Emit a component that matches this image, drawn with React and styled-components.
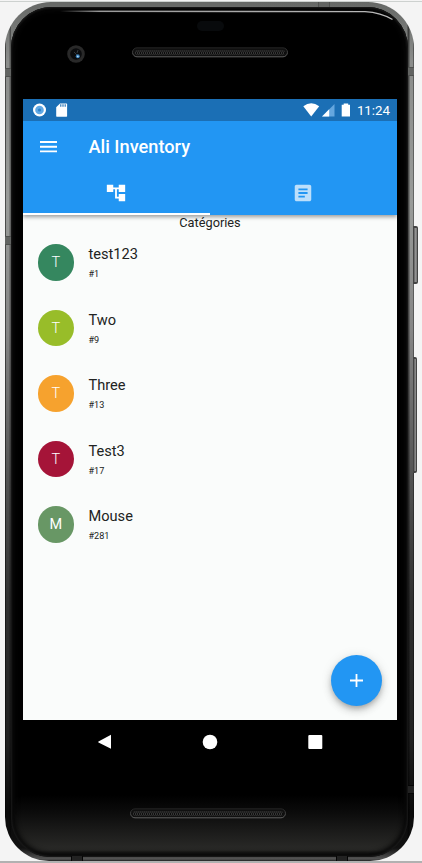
import React from 'react';
import styled, { createGlobalStyle } from 'styled-components';

const GlobalStyle = createGlobalStyle`
  * { box-sizing: border-box; }
  body { margin: 0; background: #f4f4f4; font-family: Roboto, sans-serif; }
`;

const Page = styled.main`
  width: 422px;
  height: 863px;
  padding: 2px 0 0 5px;
  overflow: hidden;
  background: linear-gradient(#f4f4f4 1px, #cdd1cf 1px 2px, #f4f4f4 2px 861px, #b1b1b1 861px);
`;

const Phone = styled.div`
  position: relative;
  width: 409px;
  height: 859px;
  padding: 5px 6px;
  border-radius: 46px 46px 44px 44px;
  background:
    linear-gradient(90deg, rgba(0,0,0,.5) 0 1px, transparent 1px 4px, rgba(0,0,0,.35) 5px 6px, transparent 6px 402px, rgba(0,0,0,.5) 403px 404px, transparent 405px 408px, rgba(0,0,0,.35) 408px),
    linear-gradient(#666866 0, #8b8d8b 60px, #999b99 200px, #858585 330px, #515151 480px, #303030 600px, #202020 740px, #090909 810px, #111 846px, #555 857px, #222 859px);
`;

const Bezel = styled.div`
  display: flex;
  flex-direction: column;
  width: 397px;
  height: 850px;
  padding: 0 12px;
  border-radius: 41px 41px 39px 39px;
  background: linear-gradient(#000 0, #000 788px, #0b0b0b 805px, #1a1a19 823px, #2a2a28 843px, #111 848px);
  box-shadow: inset 0 0 2px 1px #1c1c1c, inset 0 0 5px 4px #070707;
`;

const Antenna = styled.i`
  position: absolute;
  left: ${p => p.$x}px;
  top: ${p => p.$y}px;
  width: ${p => p.$w || 6}px;
  height: ${p => p.$h || 9}px;
  background: ${p => p.$dark ? '#222' : '#626462'};
  border: solid ${p => p.$dark ? '#050505' : '#4f514f'};
  border-width: ${p => p.$w ? '0 1px' : '1px 0'};
`;

const SideKey = styled.i`
  position: absolute;
  left: 408px;
  top: ${p => p.$y}px;
  width: ${p => p.$w}px;
  height: ${p => p.$h}px;
  border: solid #444;
  border-width: 2px 1px 2px 0;
  border-radius: 0 2px 2px 0;
  background: linear-gradient(90deg, #444 1px, #9a9a9a 2px, #777);
`;

const Reflection = styled.svg`
  position: absolute;
  left: 0;
  top: 0;
  pointer-events: none;
`;

const TopBezel = styled.div`
  display: grid;
  grid-template-columns: 77px 1fr 77px;
  align-items: start;
  flex: 0 0 92px;
  margin: 0 -6px;
`;

const Camera = styled.svg`
  display: block;
  margin: 38px 0 0 50px;
`;

const Earpiece = styled.div`
  display: flex;
  flex-direction: column;
  align-items: center;
  gap: 16px;
  padding: 14px 0 0 1px;
`;

const Sensor = styled.span`
  width: 27px;
  height: 10px;
  border-radius: 5px;
  background: #080a0c;
`;

const Grille = styled.svg`
  display: block;
`;

const Screen = styled.section`
  display: flex;
  flex-direction: column;
  position: relative;
  width: 374px;
  height: 621px;
  flex-shrink: 0;
  background: #fafcfb;
  color: #212322;
`;

const StatusBar = styled.div`
  display: flex;
  justify-content: space-between;
  height: 22px;
  padding: 0 7px 0 9px;
  background: #1b6fb5;
  color: #fff;
`;

const StatusIcons = styled.svg` display: block; `;

const StatusRight = styled.div`
  display: flex;
  align-items: center;
  gap: 5.5px;
  font-size: 13.3px;
  line-height: 22px;
`;

const Clock = styled.span`
  padding-top: 1px;
`;

const Header = styled.header`
  display: flex;
  flex-direction: column;
  height: 94px;
  flex-shrink: 0;
  background: #2296f3;
  box-shadow: 0 2px 4px rgba(0,0,0,.38);
  clip-path: inset(0 0 -8px 0);
  z-index: 1;
`;

const Toolbar = styled.div`
  display: flex;
  align-items: center;
  height: 51px;
  padding-left: 17px;
  color: #fff;
`;

const MenuButton = styled.button`
  display: flex;
  width: 49px;
  padding: 0;
  border: 0;
  background: none;
`;

const Title = styled.h1`
  margin: 0 0 0 -.5px;
  font-size: 18.2px;
  font-weight: 500;
  line-height: 22px;
`;

const Tabs = styled.nav`
  display: grid;
  grid-template-columns: 1fr 1fr;
  height: 43px;
`;

const Tab = styled.button`
  display: flex;
  align-items: center;
  justify-content: center;
  padding: 0 1px 0 0;
  border: 0;
  border-bottom: 2px solid ${p => p.$active ? '#fff' : 'transparent'};
  background: none;
  color: ${p => p.$active ? '#fff' : '#bcdffb'};
`;

const Heading = styled.h2`
  margin: 0;
  height: 15px;
  text-align: center;
  font-size: 12.75px;
  font-weight: 400;
  line-height: 16px;
`;

const List = styled.ul`
  margin: 0;
  padding: 0;
  list-style: none;
`;

const Row = styled.li`
  display: flex;
  align-items: center;
  gap: 14.5px;
  height: 65.5px;
  padding-left: 14.5px;
`;

const Avatar = styled.span`
  display: grid;
  place-items: center;
  width: 36.5px;
  height: 36.5px;
  margin-top: -1px;
  padding-top: 1px;
  border-radius: 50%;
  background: ${p => p.$color};
  color: #fff;
  font-size: 14.5px;
  font-weight: ${p => p.$bold ? 400 : 300};
`;

const Label = styled.div`
  display: flex;
  flex-direction: column;
  gap: 3px;
  padding-top: 1px;
`;

const Name = styled.span`
  font-size: 14.6px;
  line-height: 19px;
`;

const Id = styled.span`
  font-size: 9.1px;
  line-height: 14px;
`;

const AddButton = styled.button`
  position: absolute;
  right: 15px;
  bottom: 14.5px;
  display: grid;
  place-items: center;
  width: 51px;
  height: 51px;
  padding: 0;
  border: 0;
  border-radius: 50%;
  background: #2296f3;
  box-shadow: 0 3px 5px -1px rgba(0,0,0,.2), 0 5px 9px rgba(0,0,0,.14), 0 1px 12px rgba(0,0,0,.1);
`;

const NavBar = styled.div`
  display: flex;
  justify-content: center;
  align-items: center;
  height: 44px;
  flex-shrink: 0;
`;

const NavIcon = styled.svg`
  display: block;
`;

const BottomBezel = styled.div`
  display: flex;
  justify-content: center;
  padding: 44px 4px 0 0;
`;

function SpeakerGrille() {
  return (
    <Grille width="156" height="11" viewBox="0 0 156 11" fill="none">
      <defs>
        <pattern id="mesh" width="4" height="4" patternUnits="userSpaceOnUse">
          <rect width="4" height="4" fill="#0b0b0b" />
          <path d="M.5 0l1.5 2-1.5 2M2.5 0L4 2 2.5 4" stroke="#484848" strokeWidth=".8" />
        </pattern>
        <linearGradient id="rim" x2="0" y2="1">
          <stop stopColor="#222" /><stop offset="1" stopColor="#626262" />
        </linearGradient>
      </defs>
      <rect x=".5" y=".8" width="155" height="9" rx="4.5" fill="#101010" stroke="url(#rim)" />
      <rect x="3" y="3" width="150" height="5" rx="2" fill="url(#mesh)" />
    </Grille>
  );
}

const categories = [
  { name: 'test123', id: '#1', color: '#35875f' },
  { name: 'Two', id: '#9', color: '#98bd29' },
  { name: 'Three', id: '#13', color: '#f6a22e' },
  { name: 'Test3', id: '#17', color: '#a51438' },
  { name: 'Mouse', id: '#281', color: '#689765', bold: true },
];

export default function App() {
  return (
    <>
      <GlobalStyle />
      <Page>
        <Phone>
          <SideKey $y={224} $w={5} $h={58} />
          <SideKey $y={355} $w={4} $h={116} />
          <Antenna $x={0} $y={66} />
          <Antenna $x={0} $y={234} />
          <Antenna $x={403} $y={65} />
          <Antenna $x={403} $y={783} $dark />
          <Antenna $x={313} $y={0} $w={12} $h={5} />
          <Antenna $x={66} $y={854} $w={12} $h={5} $dark />
          <Antenna $x={331} $y={854} $w={12} $h={5} $dark />
          <Bezel>
            <TopBezel>
              <Camera width="18" height="18" viewBox="0 0 18 18">
                <circle cx="9" cy="9" r="8.8" fill="#292929" />
                <circle cx="9" cy="9" r="5.8" fill="#0b0c0e" />
                <path d="M7 7l3 3M11 5l-1 3" stroke="#33383c" />
                <circle cx="10.8" cy="11.2" r="2" fill="#347bb6" />
                <circle cx="10.8" cy="11.4" r=".9" fill="#b5d9f1" />
              </Camera>
              <Earpiece><Sensor /><SpeakerGrille /></Earpiece>
            </TopBezel>
            <Screen>
              <StatusBar>
                <StatusIcons width="38" height="22" viewBox="0 0 38 22">
                  <circle cx="7.5" cy="11" r="6.5" fill="#fff" />
                  <circle cx="7.5" cy="11" r="4.3" fill="#60a8e4" />
                  <circle cx="7.5" cy="11" r="1.6" fill="#2e82c9" />
                  <path d="M28 4.5h6.5q.6 0 .6.6v12q0 .6-.6.6H24.8q-.6 0-.6-.6V8.3z" fill="#fff" />
                  <path d="M28.8 5.3v2.5M31 5.3v2.5M33.2 5.3v2.5" stroke="#1b6fb5" strokeWidth="1.1" />
                </StatusIcons>
                <StatusRight>
                  <StatusIcons width="48" height="22" viewBox="0 0 48 22">
                    <path d="M.3 7.2Q8.2 1.2 16.2 7.2L8.2 17.4z" fill="#fff" />
                    <path d="M31.5 5v12.4H19z" fill="#65a7df" />
                    <path d="M26.2 10.2v7.2H19z" fill="#fff" />
                    <path d="M38.7 5.7h2V4.5h4.5v1.2h1.8v11.7h-8.3z" fill="#fff" />
                  </StatusIcons>
                  <Clock>11:24</Clock>
                </StatusRight>
              </StatusBar>
              <Header>
                <Toolbar>
                  <MenuButton aria-label="Menu">
                    <svg width="17" height="12" viewBox="0 0 17 12"><path d="M0 1h17M0 5.7h17M0 10.4h17" stroke="#fff" strokeWidth="1.9" /></svg>
                  </MenuButton>
                  <Title>Ali Inventory</Title>
                </Toolbar>
                <Tabs>
                  <Tab $active aria-label="Categories">
                    <svg width="22" height="22" viewBox="0 0 24 24" fill="currentColor"><path d="M22 11V3h-7v3H9V3H2v8h7V8h2v10h4v3h7v-8h-7v3h-2V8h2v3z" /></svg>
                  </Tab>
                  <Tab aria-label="Articles">
                    <svg width="22" height="22" viewBox="0 0 24 24" fill="currentColor"><path d="M19 3H5c-1.1 0-2 .9-2 2v14c0 1.1.9 2 2 2h14c1.1 0 2-.9 2-2V5c0-1.1-.9-2-2-2zm-5 14H7v-2h7v2zm3-4H7v-2h10v2zm0-4H7V7h10v2z" /></svg>
                  </Tab>
                </Tabs>
              </Header>
              <Heading>Catégories</Heading>
              <List>
                {categories.map(c => (
                  <Row key={c.id}>
                    <Avatar $color={c.color} $bold={c.bold}>{c.name[0].toUpperCase()}</Avatar>
                    <Label><Name>{c.name}</Name><Id>{c.id}</Id></Label>
                  </Row>
                ))}
              </List>
              <AddButton aria-label="Add">
                <svg width="13" height="13" viewBox="0 0 13 13"><path d="M6.5 0v13M0 6.5h13" stroke="#fff" strokeWidth="1.8" /></svg>
              </AddButton>
            </Screen>
            <NavBar>
              <NavIcon width="226" height="16" viewBox="0 0 226 16" fill="#fff">
                <path d="M14 .8v14L1.5 8.4q-.8-.5 0-1z" />
                <circle cx="113" cy="8" r="7.3" />
                <rect x="211.3" y="1" width="14" height="14" rx="1" />
              </NavIcon>
            </NavBar>
            <BottomBezel><SpeakerGrille /></BottomBezel>
          </Bezel>
          <Reflection width="409" height="859" viewBox="0 0 409 859" fill="none">
            <defs>
              <linearGradient id="shine"><stop stopColor="#999" stopOpacity="0" /><stop offset=".12" stopColor="#999" /><stop offset="1" stopColor="#bbb" /></linearGradient>
            </defs>
            <path d="M55 9.2L360 9.6Q376 10.5 387.5 17.5" stroke="url(#shine)" strokeWidth="1.4" />
          </Reflection>
        </Phone>
      </Page>
    </>
  );
}
